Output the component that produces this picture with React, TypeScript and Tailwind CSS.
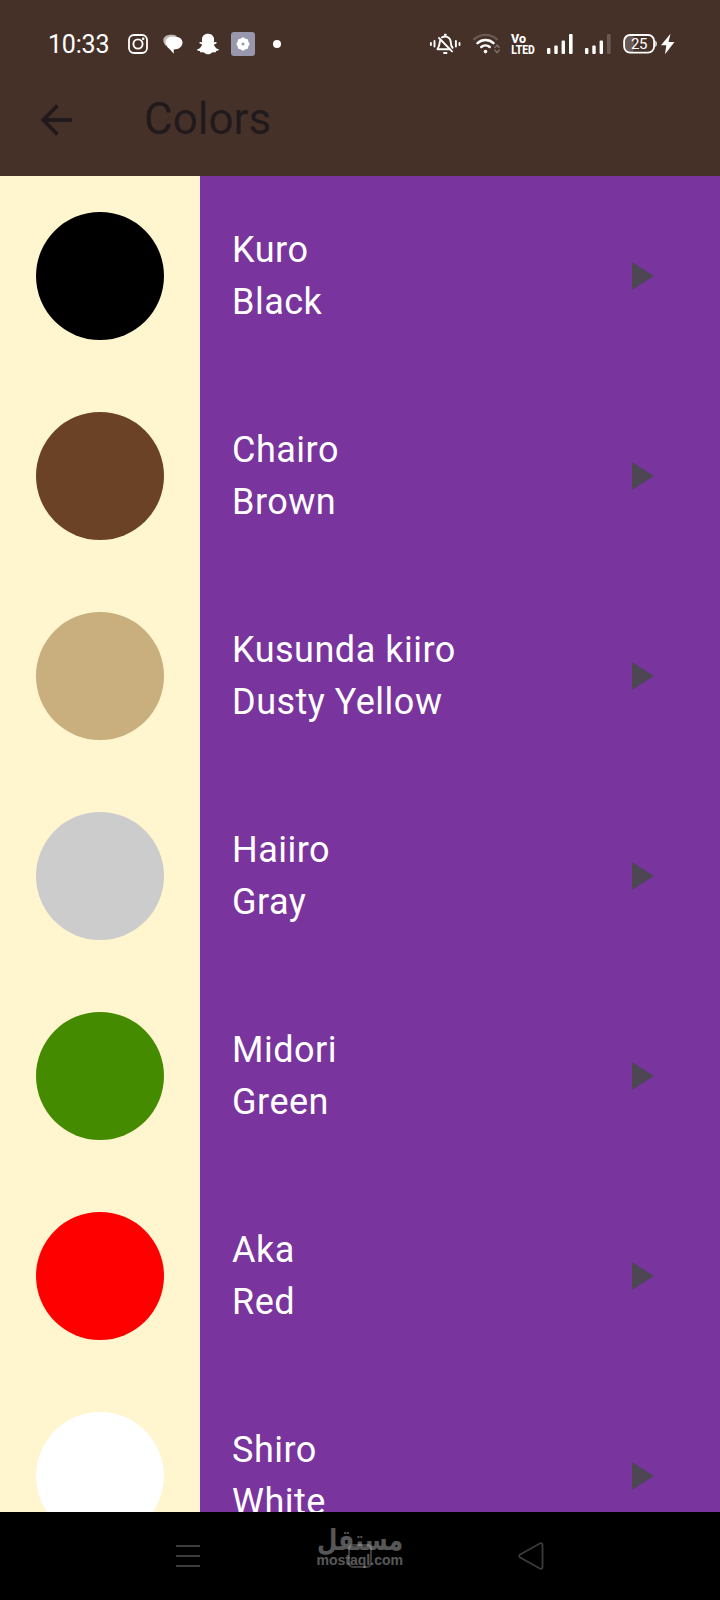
import React from 'react'
import { FaSnapchatGhost } from 'react-icons/fa'

type ColorEntry = { name: string; english: string; swatch: string }

const colors: ColorEntry[] = [
  { name: 'Kuro', english: 'Black', swatch: 'bg-black' },
  { name: 'Chairo', english: 'Brown', swatch: 'bg-[#6b4226]' },
  { name: 'Kusunda kiiro', english: 'Dusty Yellow', swatch: 'bg-[#c9ae7e]' },
  { name: 'Haiiro', english: 'Gray', swatch: 'bg-[#cccccc]' },
  { name: 'Midori', english: 'Green', swatch: 'bg-[#458b00]' },
  { name: 'Aka', english: 'Red', swatch: 'bg-[#ff0000]' },
  { name: 'Shiro', english: 'White', swatch: 'bg-white' },
]

const InstagramIcon = () => (
  <svg className="w-5 h-5" viewBox="0 0 20 20" fill="none" stroke="currentColor">
    <rect x="1" y="1" width="18" height="18" rx="5" strokeWidth="1.8" />
    <circle cx="10" cy="10" r="4.6" strokeWidth="1.900" />
    <circle cx="15.2" cy="4.8" r="1.3" fill="currentColor" stroke="none" />
  </svg>
)

const MessagesIcon = () => (
  <svg className="w-5 h-5 ml-[15px]" viewBox="0 0 20 20" fill="currentColor">
    <path
      d="M8 0.800C3.500 0.800 0.300 3 0.300 6.300c0 2.200 1.200 4.200 2.700 5.700L3 7.500C4 4.500 7.500 2.300 14 2.200 12.800 1.200 10.500 0.800 8 0.800Z"
      opacity="0.65"
    />
    <path d="M11 2.500C6 2.500 2.500 4.500 2.500 8.300c0 3 2.300 5.700 4.500 7.200l3.700 4.300v-4.200c5.200 0 8.800-2.800 8.800-7C19.500 4.800 16 2.500 11 2.500Z" />
  </svg>
)

const SettingsBadge = () => (
  <div className="w-6 h-6 ml-3 rounded-[3px] bg-[#9997ab] flex items-center justify-center">
    <svg className="w-4 h-4" viewBox="0 0 16 16" fill="white">
      <rect x="2.800" y="2.800" width="10.400" height="10.400" rx="2" />
      <rect x="2.800" y="2.800" width="10.400" height="10.400" rx="2" transform="rotate(45 8 8)" />
      <circle cx="8" cy="8" r="1.500" fill="#9997ab" />
    </svg>
  </div>
)

const MutedBellIcon = () => (
  <svg
    className="w-8 h-[22px]"
    viewBox="0 0 32 22"
    fill="none"
    stroke="currentColor"
    strokeWidth="1.900"
    strokeLinecap="round"
    strokeLinejoin="round"
  >
    <path d="M1.900 10v2M5.500 8v5.500M26.900 8v5.500M30.500 10v2" />
    <path d="M13 4.300C17 2.200 21.800 4.500 21.800 9.500c0 2.500.6 3.800 1.800 5.300M11 8c-.5 3.500-.7 5.500-2.500 8.200h12" />
    <path d="M10 5l13 13.300M15 20h2.500M15.800 1.700h1" />
  </svg>
)

const WifiIcon = () => (
  <svg className="w-[27px] h-[22px] ml-3" viewBox="0 0 27 22" fill="none" stroke="currentColor" strokeLinecap="round">
    <path d="M1.300 6.200C7.700.4 17.300.4 23.700 6.200" strokeWidth="2.400" opacity="0.2" />
    <path d="M4.500 10.100c4.600-4.100 11.400-4.100 16 0" strokeWidth="2.500" />
    <path d="M8.300 14c2.400-2.100 6-2.100 8.400 0" strokeWidth="2.500" />
    <circle cx="12.500" cy="18.600" r="1.800" fill="currentColor" stroke="none" />
    <path d="M21.900 14.500l2.200-2.400 2.200 2.400M21.900 17.200l2.200 2.400 2.200-2.400" strokeWidth="1.600" opacity="0.28" />
  </svg>
)

const VolteIcon = () => (
  <svg
    className="w-6 h-[22px] ml-[11px] overflow-visible"
    viewBox="0 0 24 22"
    fill="white"
    fontFamily="Roboto, sans-serif"
    fontWeight="800"
  >
    <text x="0" y="10" fontSize="12.500" textLength="15" lengthAdjust="spacingAndGlyphs">
      Vo
    </text>
    <text x="0.300" y="21" fontSize="13.300" textLength="23.500" lengthAdjust="spacingAndGlyphs">
      LTED
    </text>
  </svg>
)

const SignalIcon = ({ weak = false }: { weak?: boolean }) => (
  <svg className="w-[26px] h-5 ml-3" viewBox="0 0 26 20" fill="currentColor">
    <rect x="0" y="14" width="3.400" height="6" rx="1" />
    <rect x="7.300" y="11.500" width="3.400" height="8.500" rx="1" />
    <rect x="14.600" y="6.500" width="3.400" height="13.500" rx="1" />
    <rect x="22" y="0" width="3.600" height="20" rx="1" opacity={weak ? 0.2 : 1} />
  </svg>
)

const BatteryIcon = () => (
  <svg className="w-[52px] h-[22px] ml-3" viewBox="0 0 52 22" fill="none">
    <rect x="2" y="2" width="9" height="17.600" rx="4" fill="white" opacity="0.2" />
    <rect x="1.100" y="2" width="30" height="17.600" rx="6" stroke="white" strokeWidth="1.800" />
    <path d="M32.300 7.500c2 .8 2 5.700 0 6.500z" fill="white" />
    <text x="8" y="16.200" fontSize="15" fontFamily="Roboto, sans-serif" fill="white" textLength="16.500">
      25
    </text>
    <path d="M47.500.8L38 12.300h5.300L42 21.300 51.500 9h-6z" fill="white" />
  </svg>
)

const StatusBar = () => (
  <div className="h-22 pl-12 pr-[45px] flex items-center text-white">
    <span className="w-20 text-[25px] leading-none tracking-[-0.2px]">10:33</span>
    <InstagramIcon />
    <MessagesIcon />
    <FaSnapchatGhost className="w-[22px] h-[22px] ml-[14px]" />
    <SettingsBadge />
    <span className="w-2 h-2 ml-[18px] rounded-full bg-white" />
    <div className="ml-auto flex items-center">
      <MutedBellIcon />
      <WifiIcon />
      <VolteIcon />
      <SignalIcon />
      <SignalIcon weak />
      <BatteryIcon />
    </div>
  </div>
)

const AppBar = () => (
  <div className="h-22 pl-10 pb-[25px] flex items-center text-[#211a1d]">
    <svg className="w-8 h-8 mt-[1px]" viewBox="0 0 32 32" fill="none" stroke="currentColor" strokeWidth="3.800">
      <path d="M32 16H4M17.500 1.700L3.200 16l14.300 14.300" />
    </svg>
    <h1 className="ml-[72px] mb-[2px] text-[44px] leading-none">Colors</h1>
  </div>
)

const ColorRow = ({ entry }: { entry: ColorEntry }) => (
  <div className="h-[200px] shrink-0 flex">
    <div className="w-[200px] bg-[#fff5cf] flex items-center justify-center">
      <div className={`w-32 h-32 rounded-full ${entry.swatch}`} />
    </div>
    <div className="flex-1 pl-8 pr-[66px] bg-[#79359d] flex items-center justify-between">
      <div className="text-4xl leading-[52px] tracking-[0.5px] text-white">
        <p>{entry.name}</p>
        <p>{entry.english}</p>
      </div>
      <svg className="w-[22px] h-7" viewBox="0 0 22 28" fill="#4c4753">
        <path d="M0 0v28l22-14z" />
      </svg>
    </div>
  </div>
)

const NavBar = () => (
  <nav className="relative h-22 px-44 bg-black flex items-center justify-between text-[#3c3c3c]">
    <svg className="w-6 h-6" viewBox="0 0 24 24" stroke="currentColor" strokeWidth="2">
      <path d="M0 2h24M0 12h24M0 22h24" />
    </svg>
    <svg className="w-[26px] h-7" viewBox="0 0 26 28" fill="none" stroke="currentColor" strokeWidth="1.800">
      <path d="M2.200 12.500L21.800 1.500q2.700-1 2.700 1.700v21.600q0 2.700-2.700 1.700L2.200 15.500q-2-1.500 0-3z" />
    </svg>
    <svg className="absolute left-[348px] top-8 w-6 h-6" viewBox="0 0 24 24" fill="none" stroke="currentColor" strokeWidth="2">
      <rect x="1" y="1" width="22" height="22" rx="4" />
    </svg>
    <svg
      className="absolute left-[314px] top-2 w-[92px] h-[52px] overflow-visible"
      viewBox="0 0 92 52"
      fill="white"
      opacity="0.34"
    >
      <text
        x="46"
        y="30"
        textAnchor="middle"
        direction="rtl"
        fontFamily="'DejaVu Sans', sans-serif"
        fontWeight="700"
        fontSize="29"
        textLength="86"
        lengthAdjust="spacingAndGlyphs"
      >
        مستقل
      </text>
      <text
        x="2.500"
        y="45"
        fontFamily="'Liberation Sans', sans-serif"
        fontWeight="700"
        fontSize="14"
        textLength="86.500"
        lengthAdjust="spacingAndGlyphs"
      >
        mostaql.com
      </text>
    </svg>
  </nav>
)

export default function App() {
  return (
    <div className="w-[720px] h-[1600px] overflow-hidden flex flex-col bg-black font-['Roboto',sans-serif]">
      <header className="h-44 shrink-0 bg-[#463129]">
        <StatusBar />
        <AppBar />
      </header>
      <main className="flex-1 min-h-0 overflow-hidden flex flex-col">
        {colors.map((entry) => (
          <ColorRow key={entry.name} entry={entry} />
        ))}
      </main>
      <NavBar />
    </div>
  )
}
